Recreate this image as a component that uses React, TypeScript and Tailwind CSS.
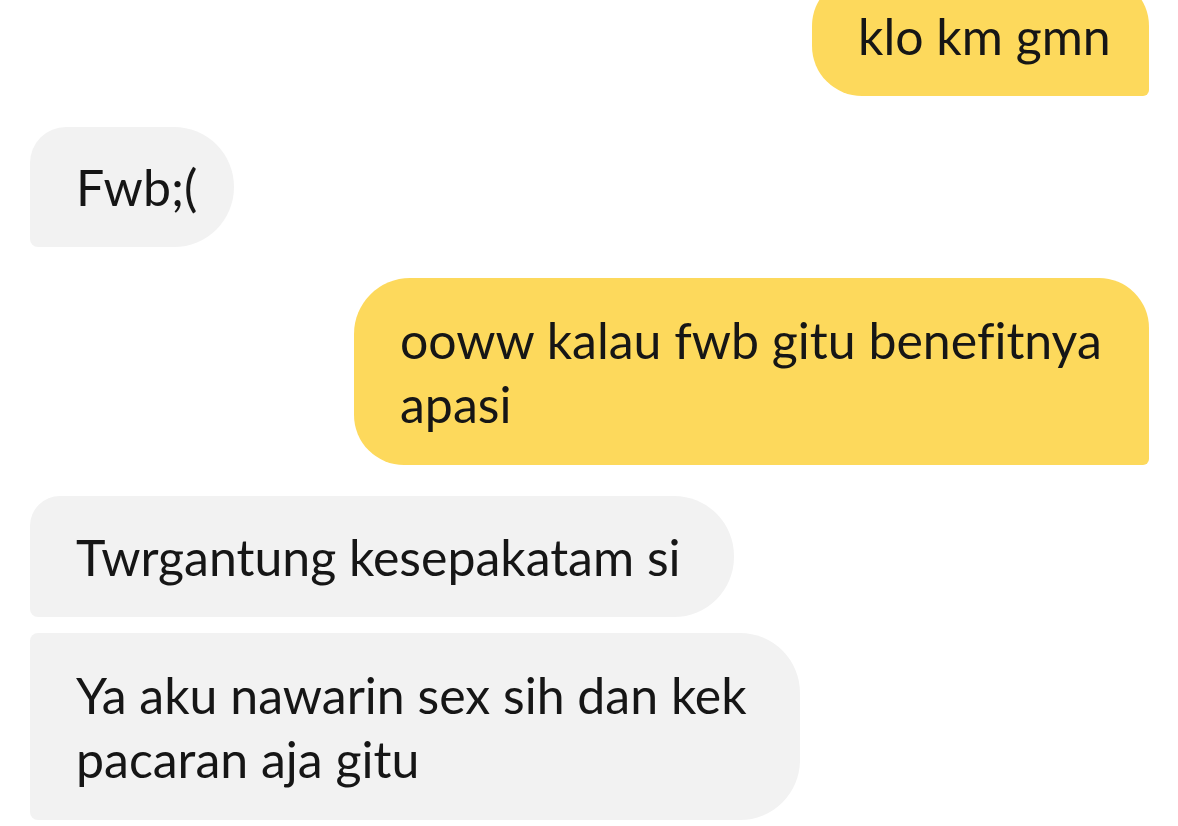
export default function App() {
  return (
    <div className="w-[1178px] h-[826px] overflow-hidden bg-white font-['Lato',sans-serif] text-[50px] leading-[64px] text-[#161616] [font-variant-ligatures:none]">
      <div className="flex flex-col pr-[29px] pl-[30px]">
        <div className="self-end -mt-6 w-[337px] whitespace-nowrap bg-[#fdd95c] pl-[46px] py-[28px] rounded-tl-[50px] rounded-tr-[50px] rounded-bl-[50px] rounded-br-[6px]">
          klo km gmn
        </div>
        <div className="self-start mt-[31px] w-[204px] whitespace-nowrap bg-[#f2f2f2] pl-[46px] py-[28px] rounded-tl-[36px] rounded-r-[60px] rounded-bl-[8px]">
          Fwb;(
        </div>
        <div className="self-end mt-[31px] w-[795px] bg-[#fdd95c] pl-[46px] pr-[40px] py-[29.5px] rounded-tl-[56px] rounded-tr-[50px] rounded-bl-[50px] rounded-br-[6px]">
          ooww kalau fwb gitu benefitnya apasi
        </div>
        <div className="self-start mt-[31px] w-[704px] whitespace-nowrap bg-[#f2f2f2] pl-[46px] py-[28.5px] rounded-tl-[30px] rounded-r-[60px] rounded-bl-[8px]">
          Twrgantung kesepakatam si
        </div>
        <div className="self-start mt-4 w-[770px] bg-[#f2f2f2] pl-[46px] pr-[40px] py-[29.5px] rounded-tl-[8px] rounded-r-[60px] rounded-bl-[8px]">
          Ya aku nawarin sex sih dan kek pacaran aja gitu
        </div>
      </div>
    </div>
  )
}
